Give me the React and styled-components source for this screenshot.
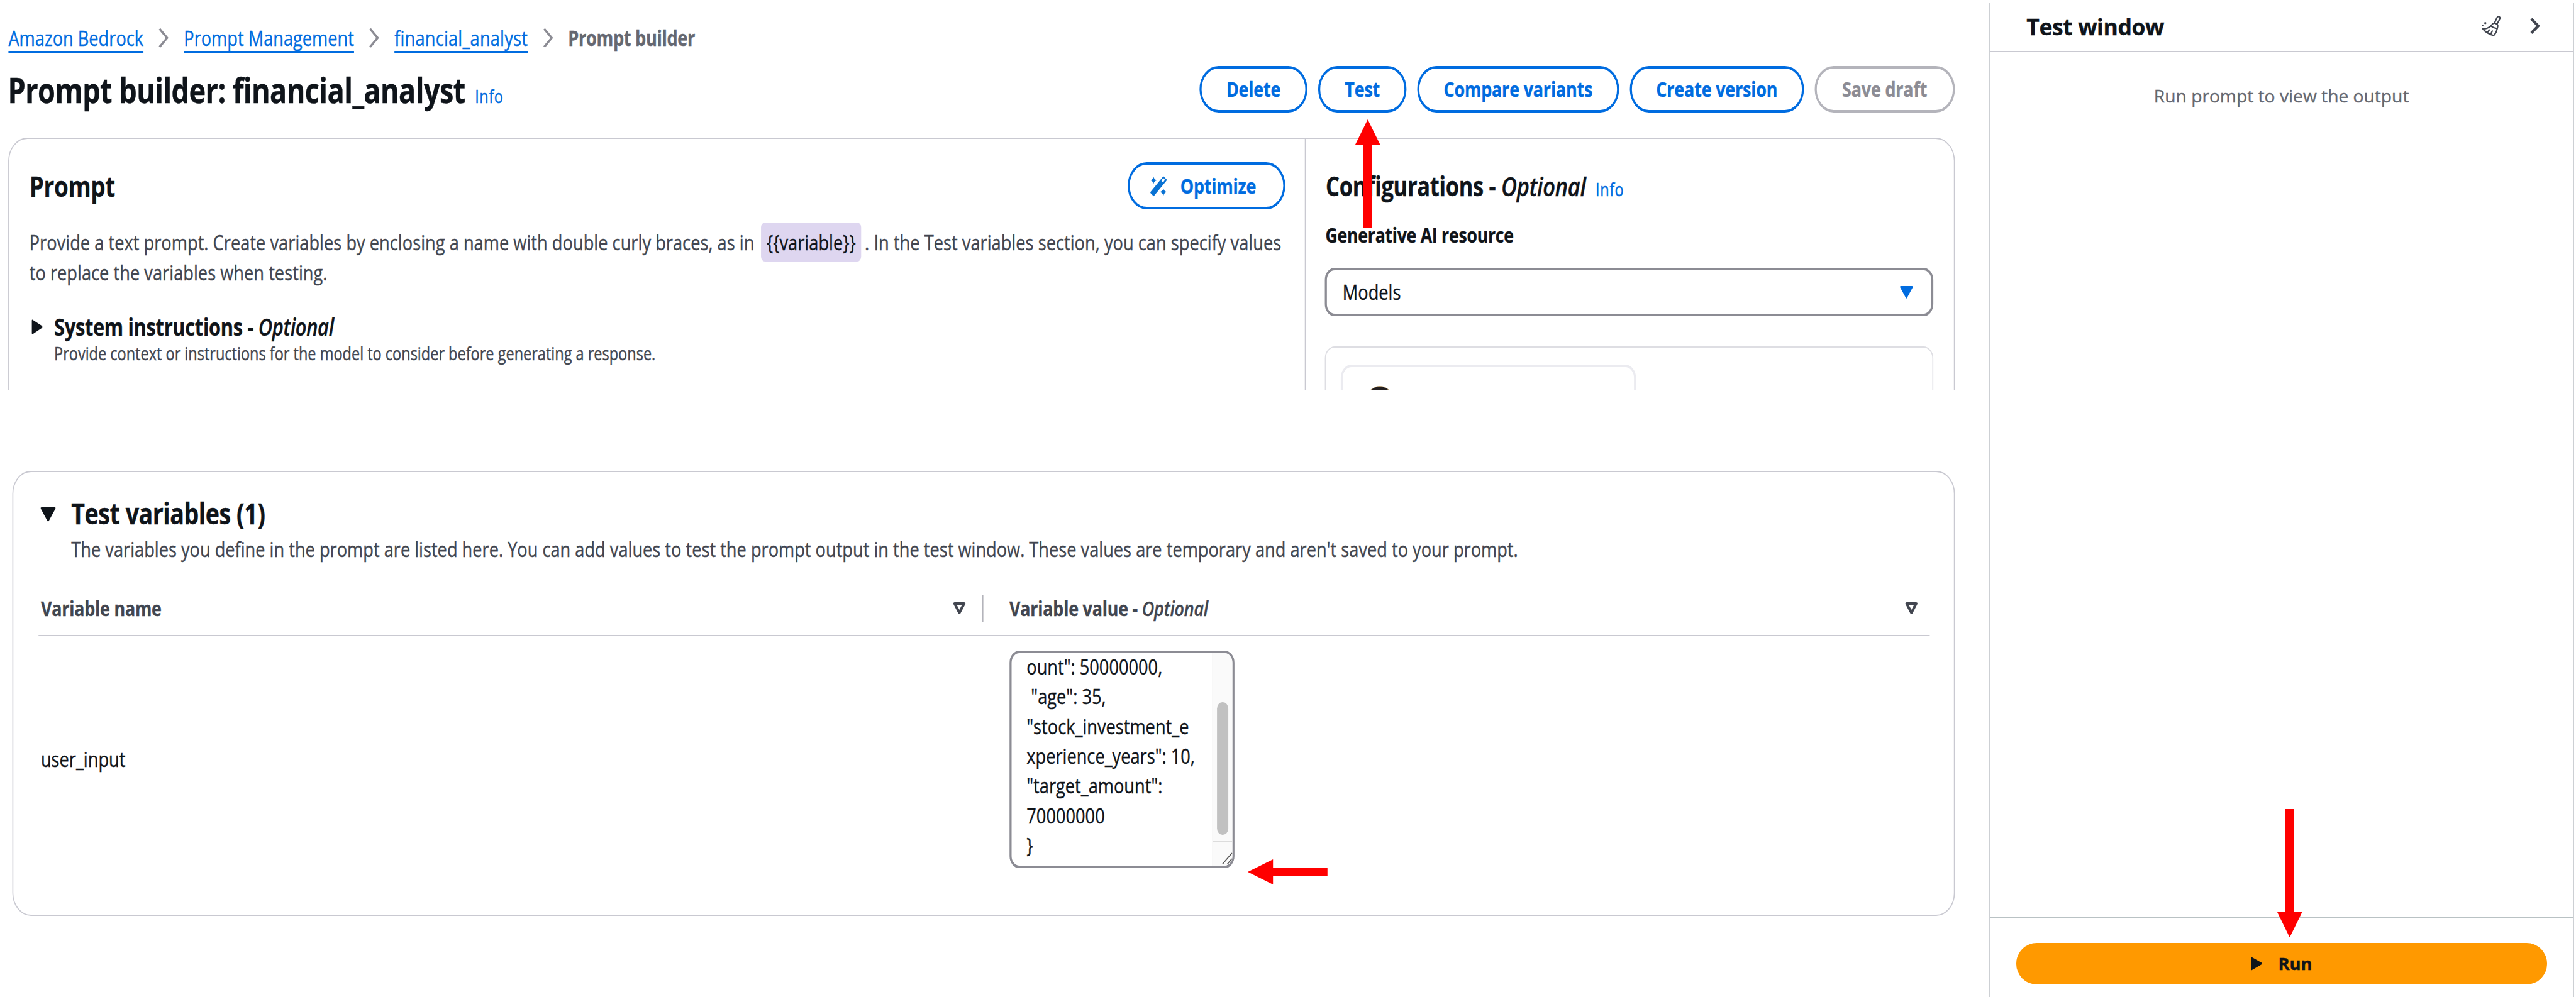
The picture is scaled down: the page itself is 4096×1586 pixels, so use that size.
import React from "react";
import styled, { createGlobalStyle, css } from "styled-components";

/* Design unit -> window pixel. The console column is condensed horizontally. */
const UNIT = 0.959;
const CONDENSE = 0.8165;
const v = (n) => `${+(n * UNIT).toFixed(3)}px`;
const h = (n) => `${+((n * UNIT) / CONDENSE).toFixed(3)}px`;

const color = {
  text: "#0f141a",
  body: "#424650",
  muted: "#656871",
  link: "#006ce0",
  line: "#c9c9d1",
  control: "#8c8c94",
  disabled: "#b4b4bb",
  red: "#ff0000",
};

const GlobalStyle = createGlobalStyle`
  * { box-sizing: border-box; }
  html, body { margin: 0; background: #fff; overflow: hidden; }
  body {
    font-family: "Open Sans", "Noto Sans", sans-serif;
    font-variant-ligatures: none;
    color: ${color.text};
    -webkit-text-stroke: 0.4px currentColor;
  }
`;

const Page = styled.div`
  position: relative;
  display: flex;
  width: 4096px;
  height: 1586px;
  background: #fff;
  overflow: hidden;
`;

/* ---------- console column ---------- */

const ConsoleColumn = styled.div`
  flex: none;
  width: ${v(3298)};
  overflow: hidden;
`;

const Condensed = styled.div`
  width: ${h(3298)};
  transform: scaleX(${CONDENSE});
  transform-origin: 0 0;
  font-size: ${v(34.75)};
  line-height: ${v(49.6)};

  em { font-weight: 600; }
`;

const BuilderShot = styled.section`
  display: flex;
  flex-direction: column;
  height: ${v(646.3)};
  padding: ${v(38.4)} ${h(57)} 0 ${h(14)};
  overflow: hidden;
`;

const Breadcrumbs = styled.nav`
  display: flex;
  align-items: center;
  gap: ${h(25.5)};
  height: ${v(49.6)};
  white-space: nowrap;
`;

const Crumb = styled.a`
  color: ${color.link};
  letter-spacing: ${(p) => h(p.$tracking || 0)};
  text-decoration: underline;
  text-decoration-thickness: 3px;
  text-underline-offset: ${v(8.2)};
  text-decoration-skip-ink: none;
`;

const CurrentCrumb = styled.span`
  color: ${color.muted};
  font-weight: 700;
  letter-spacing: ${h(-0.35)};
`;

const Icon = styled.svg`
  flex: none;
  display: block;
  overflow: visible;
  width: ${(p) => h(p.$w)};
  height: ${(p) => v(p.$h)};
`;

const HeaderRow = styled.header`
  display: flex;
  align-items: center;
  justify-content: space-between;
  height: ${v(77.5)};
  margin-top: ${v(21.5)};
  white-space: nowrap;
`;

const PageTitle = styled.h1`
  margin: 0 0 0 ${h(-1)};
  font-size: ${v(57.6)};
  font-weight: 700;
  line-height: ${v(72)};
  letter-spacing: ${h(-0.6)};
`;

const InfoLink = styled.a`
  margin-left: ${h(16)};
  color: ${color.link};
  font-size: ${v(30)};
  font-weight: 500;
  font-style: normal;
  line-height: 1;
  letter-spacing: ${h(0.6)};
`;

const Actions = styled.div`
  display: flex;
  gap: ${h(17.5)};
`;

const Button = styled.button`
  display: flex;
  align-items: center;
  justify-content: center;
  gap: ${h(22)};
  width: ${(p) => h(p.$w)};
  height: ${v(77.6)};
  padding: 0 ${(p) => h(p.$nudge || 0)} 0 0;
  border: 4px solid ${(p) => (p.$disabled ? color.disabled : color.link)};
  border-radius: ${v(39)};
  background: #fff;
  color: ${(p) => (p.$disabled ? color.control : color.link)};
  font: 700 ${v(34.4)} / ${v(49.6)} "Open Sans", "Noto Sans", sans-serif;
  letter-spacing: ${h(-0.2)};
  white-space: nowrap;
`;

const BuilderCard = styled.div`
  display: flex;
  flex: none;
  height: ${v(600)};
  margin-top: ${v(41)};
  border: 2px solid ${color.line};
  border-radius: ${v(39)};
`;

const PromptPane = styled.div`
  flex: none;
  width: ${h(2149.5)};
  padding: ${v(39.3)} ${h(32.5)} 0 ${h(33)};
  border-right: 2px solid ${color.line};
`;

const ConfigPane = styled.div`
  flex: 1;
  padding: ${v(39.3)} ${h(34)} 0 ${h(31.5)};
`;

const PaneHeader = styled.div`
  display: flex;
  align-items: center;
  justify-content: space-between;
  height: ${v(78)};
  white-space: nowrap;
`;

const PaneTitle = styled.h2`
  margin: 0 0 0 ${(p) => h(p.$inset || 0)};
  font-size: ${(p) => v(p.$size)};
  font-weight: 700;
  line-height: ${v(60)};
  letter-spacing: ${h(-0.3)};
`;

const Description = styled.p`
  margin: ${v(30.5)} 0 0;
  color: ${color.body};
  letter-spacing: ${h(0.03)};
  white-space: nowrap;
`;

const VariableTag = styled.span`
  margin: 0 ${h(6)} 0 ${h(4)};
  padding: ${v(8.4)} ${h(9)};
  border-radius: ${v(8)};
  background: #ded6f0;
  color: ${color.text};
`;

const Expander = styled.div`
  display: flex;
  align-items: flex-start;
  gap: ${h(19)};
  margin-top: ${v(40.5)};
  padding-left: ${h(4.5)};
  white-space: nowrap;

  svg { margin-top: ${v(12.5)}; }
`;

const ExpanderTitle = styled.h3`
  margin: 0;
  font-size: ${v(39.4)};
  font-weight: 700;
  line-height: ${v(51)};
  letter-spacing: ${h(-0.33)};
`;

const ExpanderNote = styled.p`
  margin: 0;
  color: ${color.body};
  font-size: ${v(30.05)};
  line-height: ${v(36)};
`;

const FieldLabel = styled.label`
  display: block;
  margin: ${v(18)} 0 0 ${h(1)};
  font-size: ${v(34)};
  font-weight: 700;
  letter-spacing: ${h(-0.25)};
`;

const Select = styled.div`
  display: flex;
  align-items: center;
  justify-content: space-between;
  height: ${v(80)};
  margin-top: ${v(29.5)};
  padding: 0 ${h(30.5)} 0 ${h(26)};
  border: 4px solid ${color.control};
  border-radius: ${v(20)};
`;

const ModelGroup = styled.div`
  height: ${v(200)};
  margin-top: ${v(50)};
  padding: ${v(28)} ${h(24.5)};
  border: 2px solid #dedee3;
  border-radius: ${v(20)};
`;

const ModelCard = styled.div`
  width: ${h(490)};
  height: ${v(160)};
  padding: ${v(32)} ${h(36.5)};
  border: 4px solid #ebebf0;
  border-radius: ${v(22)};
`;

const ModelAvatar = styled.div`
  width: ${h(50)};
  height: ${v(60)};
  border: 1px solid #b99b6b;
  border-radius: 50%;
  background: #231f20;
`;

/* ---------- test variables ---------- */

const VariablesCard = styled.section`
  width: ${h(3221)};
  height: ${v(738.5)};
  margin: ${v(134.7)} 0 0 ${h(20.5)};
  padding: ${v(39)} ${h(40.5)} 0 ${h(41.5)};
  border: 2px solid ${color.line};
  border-radius: ${v(38)};
`;

const VariablesHeading = styled.div`
  display: flex;
  align-items: flex-start;
  gap: ${h(26)};
  padding-left: ${h(3.5)};
  white-space: nowrap;

  svg { margin-top: ${v(19.5)}; }
`;

const VariablesTitle = styled.h2`
  margin: 0;
  font-size: ${v(48)};
  font-weight: 700;
  line-height: ${v(60)};
  letter-spacing: ${h(-0.5)};
`;

const VariablesNote = styled.p`
  margin: ${v(4)} 0 0;
  color: ${color.body};
`;

const tableColumns = css`
  display: grid;
  grid-template-columns: ${h(1567)} 1fr;
`;

const TableHead = styled.div`
  ${tableColumns}
  margin-top: ${v(52)};
  padding-bottom: ${v(22)};
  border-bottom: 2px solid ${color.line};
  color: ${color.body};
  font-size: ${v(34.3)};
  font-weight: 700;
  line-height: ${v(44)};
  letter-spacing: ${h(-0.2)};
`;

const HeadCell = styled.div`
  display: flex;
  align-items: center;
  justify-content: space-between;
  height: ${v(44)};
  padding: 0 ${(p) => h(p.$right)} 0 ${(p) => h(p.$left)};
  border-right: ${(p) => (p.$divided ? "2px solid #b4b4bb" : "none")};
`;

const TableRow = styled.div`
  ${tableColumns}
  align-items: center;
  padding-top: ${v(24)};
`;

const NameCell = styled.div`
  padding-left: ${h(4)};
`;

const ValueBox = styled.div`
  display: flex;
  width: ${h(373.5)};
  height: ${v(360)};
  margin-left: ${h(43)};
  border: 4px solid ${color.control};
  border-radius: ${v(20)};
  overflow: hidden;
`;

const ValueText = styled.pre`
  flex: 1;
  margin: ${v(-3)} 0 0;
  padding-left: ${h(25)};
  font: inherit;
  line-height: ${v(49.5)};
`;

const ScrollArea = styled.div`
  display: flex;
  flex-direction: column;
  width: ${h(34)};
  border-left: 1.5px solid #e4e4e4;
  background: #fafafa;
`;

const ScrollTrack = styled.div`
  display: flex;
  justify-content: center;
  height: ${v(312)};
  padding-top: ${v(81)};
  border-bottom: 1.5px solid #dcdcdc;
`;

const ScrollThumb = styled.div`
  width: ${h(18.8)};
  height: ${v(219.6)};
  border-radius: ${v(11)};
  background: #c1c1c1;
`;

const ResizeCorner = styled.div`
  display: flex;
  justify-content: flex-end;
  align-items: flex-end;
  flex: 1;
  padding: 0 ${h(1)} ${v(3)} 0;
`;

/* ---------- test window ---------- */

const TestPanel = styled.aside`
  flex: none;
  display: flex;
  flex-direction: column;
  width: ${v(969.5)};
  margin-top: ${v(4)};
  border: solid #cdd0d4;
  border-width: 0 2px;
`;

const TestHeader = styled.div`
  display: flex;
  align-items: center;
  height: ${v(82.8)};
  padding: 0 ${v(54)} ${v(2)} ${v(60)};
  border-bottom: 2px solid ${color.line};
`;

const TestTitle = styled.h2`
  flex: 1;
  margin: 0;
  padding-top: ${v(2.5)};
  font-size: ${v(37)};
  font-weight: 700;
  line-height: ${v(50)};
  letter-spacing: ${v(-0.4)};
`;

const TestIcon = styled.svg`
  flex: none;
  display: block;
  overflow: visible;
  width: ${(p) => v(p.$w)};
  height: ${(p) => v(p.$h)};
  margin-left: ${(p) => v(p.$gap || 0)};
`;

const TestOutput = styled.div`
  flex: 1;
  padding-top: ${v(51)};
  color: ${color.muted};
  font-size: ${v(29.4)};
  line-height: ${v(42)};
  text-align: center;
`;

const TestFooter = styled.div`
  height: ${v(133.3)};
  padding: ${v(42)} ${v(42.5)} 0;
  border-top: 2px solid #b9c2c4;
`;

const RunButton = styled.button`
  display: flex;
  align-items: center;
  justify-content: center;
  gap: ${v(27)};
  width: 100%;
  height: ${v(68)};
  padding: 0;
  border: 0;
  border-radius: ${v(34)};
  background: #ff9900;
  color: ${color.text};
  font: 700 ${v(28.6)} / ${v(40)} "Open Sans", "Noto Sans", sans-serif;
`;

/* ---------- annotation arrows floating over the page ---------- */

const Arrow = styled.svg`
  position: absolute;
  left: ${(p) => v(p.$x)};
  top: ${(p) => v(p.$y)};
  width: ${(p) => v(p.$w)};
  height: ${(p) => v(p.$h)};
  fill: ${color.red};
`;

const Chevron = () => (
  <Icon $w={16} $h={32} viewBox="0 0 16 32" preserveAspectRatio="none">
    <path d="M1.5 1 L14 16 L1.5 31" fill="none" stroke={color.control} strokeWidth="3.6" />
  </Icon>
);

const SortIcon = () => (
  <Icon $w={21} $h={20.5} viewBox="0 0 21 20.5" preserveAspectRatio="none">
    <path d="M2.6 2.2 H18.4 L10.5 17.2 Z" fill="none" stroke={color.body} strokeWidth="4.4" strokeLinejoin="round" />
  </Icon>
);

const WandIcon = () => (
  <Icon $w={27.5} $h={33.5} viewBox="0 0 82 100" preserveAspectRatio="none">
    <path
      fill="#0972d3"
      fillRule="evenodd"
      d="M65 1 L81 17 Q82 20 80 23 L17 100 L1 84 Q0 81 2 78 Z M65 10 L55 22 L63 32 L73 19 Z"
    />
    <path fill="#0972d3" d="M16 2 Q19 18 34 21 Q19 24 16 40 Q13 24 0 21 Q13 18 16 2 Z" />
    <path fill="#0972d3" d="M65 60 Q68 76 82 79 Q68 82 65 99 Q62 82 47 79 Q62 76 65 60 Z" />
  </Icon>
);

const BroomIcon = () => (
  <TestIcon $w={32} $h={34} viewBox="0 0 96 102" preserveAspectRatio="none">
    <g fill="none" stroke={color.body} strokeWidth="7" strokeLinecap="round" strokeLinejoin="round">
      <path d="M64 36 L76 10 Q80 2 87 5 Q94 9 90 17 L76 42" />
      <path d="M48 50 Q54 36 66 37 L76 42 Q84 48 77 64 Q60 62 46 51" />
      <path d="M46 51 Q28 66 6 65 Q24 90 60 98 Q74 86 77 64" />
      <path d="M30 82 L38 71 M46 90 L53 76" />
    </g>
    <circle cx="18" cy="37" r="5.5" fill={color.body} />
    <circle cx="5" cy="49" r="4" fill={color.body} />
  </TestIcon>
);

const sampleInput = `ount": 50000000,
 "age": 35,
"stock_investment_e
xperience_years": 10,
"target_amount":
70000000
}`;

const actions = [
  { label: "Delete", width: 179.5 },
  { label: "Test", width: 146.5 },
  { label: "Compare variants", width: 335 },
  { label: "Create version", width: 289 },
  { label: "Save draft", width: 232.5, disabled: true },
];

export default function App() {
  return (
    <Page>
      <GlobalStyle />
      <ConsoleColumn>
        <Condensed>
          <BuilderShot>
            <Breadcrumbs>
              <Crumb>Amazon Bedrock</Crumb>
              <Chevron />
              <Crumb>Prompt Management</Crumb>
              <Chevron />
              <Crumb $tracking={0.22}>financial_analyst</Crumb>
              <Chevron />
              <CurrentCrumb>Prompt builder</CurrentCrumb>
            </Breadcrumbs>
            <HeaderRow>
              <PageTitle>
                Prompt builder: financial_analyst<InfoLink>Info</InfoLink>
              </PageTitle>
              <Actions>
                {actions.map((a) => (
                  <Button key={a.label} $w={a.width} $disabled={a.disabled}>
                    {a.label}
                  </Button>
                ))}
              </Actions>
            </HeaderRow>
            <BuilderCard>
              <PromptPane>
                <PaneHeader>
                  <PaneTitle $size={47}>Prompt</PaneTitle>
                  <Button $w={261} $nudge={11}>
                    <WandIcon />
                    Optimize
                  </Button>
                </PaneHeader>
                <Description>
                  Provide a text prompt. Create variables by enclosing a name with double curly braces, as in{" "}
                  <VariableTag>{"{{variable}}"}</VariableTag>. In the Test variables section, you can specify values
                  <br />
                  to replace the variables when testing.
                </Description>
                <Expander>
                  <Icon $w={17.5} $h={25} viewBox="0 0 17.5 25" preserveAspectRatio="none">
                    <path d="M1 0.5 Q0 0 0 2 V23 Q0 25 1.5 24.5 L17 14 Q18 12.5 17 11 Z" fill={color.text} />
                  </Icon>
                  <div>
                    <ExpanderTitle>
                      System instructions - <em>Optional</em>
                    </ExpanderTitle>
                    <ExpanderNote>
                      Provide context or instructions for the model to consider before generating a response.
                    </ExpanderNote>
                  </div>
                </Expander>
              </PromptPane>
              <ConfigPane>
                <PaneHeader>
                  <PaneTitle $size={44} $inset={1.5}>
                    Configurations - <em>Optional</em>
                    <InfoLink>Info</InfoLink>
                  </PaneTitle>
                </PaneHeader>
                <FieldLabel>Generative AI resource</FieldLabel>
                <Select>
                  Models
                  <Icon $w={21.5} $h={20.5} viewBox="0 0 21.5 20.5" preserveAspectRatio="none">
                    <path d="M1.5 0 H20 Q22 0 21 2.5 L11.5 20 Q10.7 21 10 20 L0.5 2.5 Q-0.5 0 1.5 0 Z" fill={color.link} />
                  </Icon>
                </Select>
                <ModelGroup>
                  <ModelCard>
                    <ModelAvatar />
                  </ModelCard>
                </ModelGroup>
              </ConfigPane>
            </BuilderCard>
          </BuilderShot>

          <VariablesCard>
            <VariablesHeading>
              <Icon $w={25} $h={23.5} viewBox="0 0 25 23.5" preserveAspectRatio="none">
                <path d="M1.5 0 H23.5 Q25.5 0 24.5 2.5 L13.5 23 Q12.5 24 11.5 23 L0.5 2.5 Q-0.5 0 1.5 0 Z" fill={color.text} />
              </Icon>
              <div>
                <VariablesTitle>Test variables (1)</VariablesTitle>
                <VariablesNote>
                  The variables you define in the prompt are listed here. You can add values to test the prompt output in
                  the test window. These values are temporary and aren't saved to your prompt.
                </VariablesNote>
              </div>
            </VariablesHeading>
            <TableHead>
              <HeadCell $left={4} $right={28} $divided>
                Variable name
                <SortIcon />
              </HeadCell>
              <HeadCell $left={43} $right={20}>
                <span>
                  Variable value - <em>Optional</em>
                </span>
                <SortIcon />
              </HeadCell>
            </TableHead>
            <TableRow>
              <NameCell>user_input</NameCell>
              <ValueBox>
                <ValueText>{sampleInput}</ValueText>
                <ScrollArea>
                  <ScrollTrack>
                    <ScrollThumb />
                  </ScrollTrack>
                  <ResizeCorner>
                    <Icon $w={15.5} $h={18} viewBox="0 0 15.5 18" preserveAspectRatio="none">
                      <path d="M0 18 L15.5 0 M8 18 L15.5 9.5" fill="none" stroke="#555" strokeWidth="1.8" />
                    </Icon>
                  </ResizeCorner>
                </ScrollArea>
              </ValueBox>
            </TableRow>
          </VariablesCard>
        </Condensed>
      </ConsoleColumn>

      <TestPanel>
        <TestHeader>
          <TestTitle>Test window</TestTitle>
          <BroomIcon />
          <TestIcon $w={16} $h={27.5} $gap={49} viewBox="0 0 16 27.5">
            <path d="M2 2 L13.5 13.75 L2 25.5" fill="none" stroke={color.body} strokeWidth="4.4" />
          </TestIcon>
        </TestHeader>
        <TestOutput>Run prompt to view the output</TestOutput>
        <TestFooter>
          <RunButton>
            <TestIcon $w={18.5} $h={22.5} viewBox="0 0 18.5 22.5">
              <path d="M1 0.3 Q0 0 0 2 V20.5 Q0 22.8 1.5 22.2 L18 12.5 Q19 11.2 18 10 Z" fill={color.text} />
            </TestIcon>
            Run
          </RunButton>
        </TestFooter>
      </TestPanel>

      <Arrow $x={2247.6} $y={198.6} $w={41.2} $h={180.4} viewBox="0 0 41.2 180.4">
        <path d="M20.6 0 L41.2 41.8 H27.8 V180.4 H13.4 V41.8 H0 Z" />
      </Arrow>
      <Arrow $x={2068.8} $y={1425.4} $w={132.2} $h={41.8} viewBox="0 0 132.2 41.8">
        <path d="M0 20.9 L41.9 0 V13.8 H132.2 V28 H41.9 V41.8 Z" />
      </Arrow>
      <Arrow $x={3775.8} $y={1342} $w={41.2} $h={213} viewBox="0 0 41.2 213">
        <path d="M20.6 213 L41.2 171 H27.8 V0 H13.4 V171 H0 Z" />
      </Arrow>
    </Page>
  );
}
